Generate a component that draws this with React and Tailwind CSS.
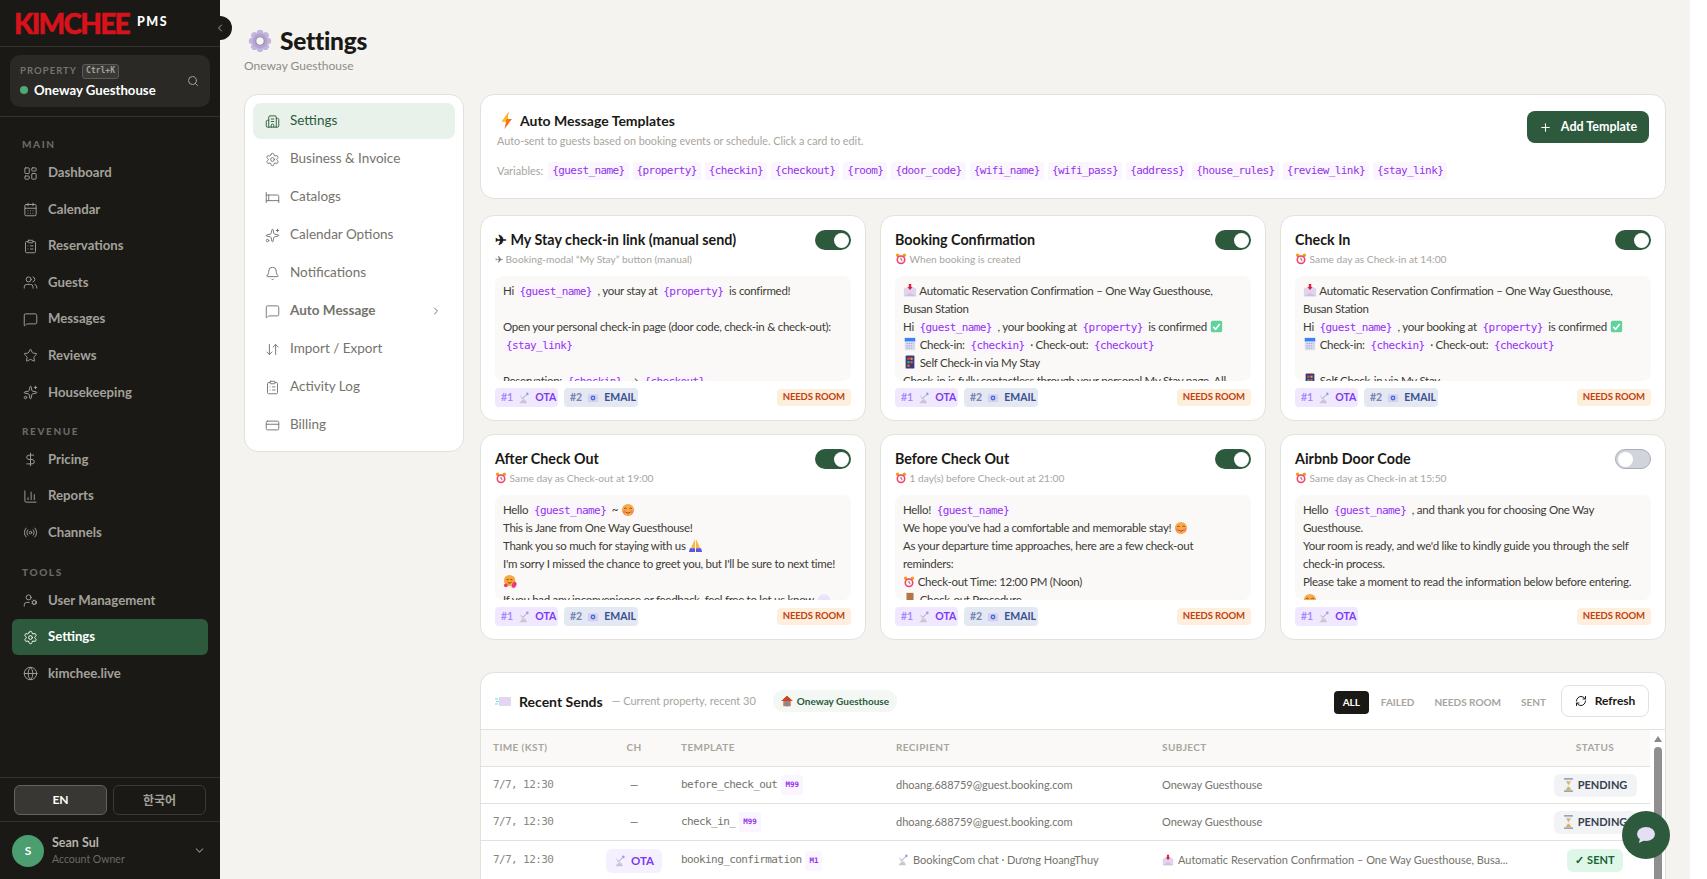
import React from 'react';
import {
  ArrowDownUp, Bed, Bell, Building2, ChartColumn, ChevronDown, ChevronLeft, ChevronRight, ClipboardList,
  CalendarDays, CreditCard, DollarSign, Globe, LayoutDashboard, MessageSquare, Plus, Radio, RefreshCw,
  Search, Settings, Sparkles, Star, UserCog, Users,
} from 'lucide-react';

const MONO = "font-[family-name:'DejaVu_Sans_Mono',monospace]";

// small colour pictograms, the page has these as emoji
const Clock = ({ s = 12 }) => (
  <svg width={s} height={s} viewBox="0 0 16 16" className="inline-block align-[-2px]">
    <circle cx="3.5" cy="3" r="2.2" fill="#f59e0b" /><circle cx="12.5" cy="3" r="2.2" fill="#f59e0b" />
    <circle cx="8" cy="9" r="6" fill="#f43f6e" /><circle cx="8" cy="9" r="4" fill="#fdf2f4" />
    <path d="M8 6.5V9l1.8 1" stroke="#444" strokeWidth="1" fill="none" />
  </svg>
);
const Inbox = ({ s = 14 }) => (
  <svg width={s} height={s} viewBox="0 0 16 16" className="inline-block align-[-2px]">
    <path d="M1 6l3-1h8l3 1v9H1z" fill="#e2d3ee" /><path d="M1 15l7-4 7 4z" fill="#d3bfe2" />
    <path d="M6.6 1h2.8v3.5H11L8 8 5 4.500h1.600z" fill="#e11d48" />
  </svg>
);
const Cal = ({ s = 14 }) => (
  <svg width={s} height={s} viewBox="0 0 16 16" className="inline-block align-[-2px]">
    <rect x="2" y="1" width="12" height="14" rx="1" fill="#dcdcf2" /><rect x="2" y="1" width="12" height="4" fill="#3b82f6" />
    <path d="M4 7.500h8M4 10h8M4 12.500h8" stroke="#a5a5c8" strokeWidth="1.200" strokeDasharray="1.500 1" />
  </svg>
);
const Phone = ({ s = 14 }) => (
  <svg width={s} height={s} viewBox="0 0 16 16" className="inline-block align-[-2px]">
    <rect x="3" y="0.500" width="10" height="15" rx="1" fill="#3b3a78" />
    <rect x="5" y="3" width="2.500" height="2.500" fill="#ef4444" /><rect x="8.500" y="3" width="2.500" height="2.500" fill="#f59e0b" />
    <rect x="5" y="7" width="2.500" height="2.500" fill="#22c55e" /><rect x="8.500" y="7" width="2.500" height="2.500" fill="#ec4899" />
    <rect x="5" y="11" width="2.500" height="2.500" fill="#f97316" />
  </svg>
);
const Check = ({ s = 13 }) => (
  <svg width={s} height={s} viewBox="0 0 16 16" className="inline-block align-[-2px]">
    <rect x="1" y="1" width="14" height="14" rx="2" fill="#5fd39a" /><path d="M4 8.500l3 3 5-6.500" stroke="#fff" strokeWidth="2" fill="none" />
  </svg>
);
const Smile = ({ s = 14 }) => (
  <svg width={s} height={s} viewBox="0 0 16 16" className="inline-block align-[-3px]">
    <circle cx="8" cy="8" r="7" fill="#f7a94b" /><circle cx="4" cy="10" r="1.800" fill="#f47f6a" /><circle cx="12" cy="10" r="1.800" fill="#f47f6a" />
    <path d="M3.500 6.500q1.500-1.500 3 0M9.500 6.500q1.500-1.500 3 0M5.500 10.500q2.500 2.500 5 0" stroke="#7a3b12" strokeWidth="0.900" fill="none" />
  </svg>
);
const Pray = ({ s = 15 }) => (
  <svg width={s} height={s} viewBox="0 0 16 16" className="inline-block align-[-3px]">
    <path d="M7.500 1L3 11h4.500zM8.500 1L13 11H8.500z" fill="#f6b73c" /><path d="M2 11h5.500v4H1zM8.500 11H14l1 4H8.500z" fill="#5b57d9" />
  </svg>
);
const Hearts = ({ s = 15 }) => (
  <svg width={s} height={s} viewBox="0 0 16 16" className="inline-block align-[-3px]">
    <circle cx="7" cy="7" r="6" fill="#f9a63a" /><path d="M10 10l2-2q2 0 2.500 2T12 15l-3-1z" fill="#ec3a78" /><circle cx="3" cy="12" r="2" fill="#ec3a78" />
    <path d="M4 6h2M8 6h2M5 9q2 1.500 4 0" stroke="#7a3b12" strokeWidth="1" fill="none" />
  </svg>
);
const Bubble = ({ s = 14 }) => (
  <svg width={s} height={s} viewBox="0 0 16 16" className="inline-block align-[-3px]">
    <ellipse cx="8" cy="7.500" rx="7" ry="6" fill="#e9e4f7" />
  </svg>
);
const Door = ({ s = 14 }) => (
  <svg width={s} height={s} viewBox="0 0 16 16" className="inline-block align-[-2px]">
    <rect x="4" y="1" width="8" height="14" fill="#b5734a" />
  </svg>
);
const Dish = ({ s = 12 }) => (
  <svg width={s} height={s} viewBox="0 0 16 16" className="inline-block align-[-2px] shrink-0">
    <path d="M2 15h10l-2-4H5z" fill="#c9c5cf" />
    <path d="M3 4q0 7 8 8z" fill="#d3ced9" />
    <path d="M7 8l5-5" stroke="#a29dab" strokeWidth="1.300" />
    <circle cx="12.500" cy="2.500" r="1.700" fill="#86a9e6" />
  </svg>
);
const Mail = ({ s = 12 }) => (
  <svg width={s} height={s} viewBox="0 0 16 16" className="inline-block align-[-2px] shrink-0">
    <rect x="1" y="3" width="14" height="10.500" rx="1" fill="#d9cdf0" /><circle cx="8" cy="8" r="3.200" fill="#3f6fdc" /><circle cx="8" cy="8" r="1.200" fill="#dbe6fb" />
  </svg>
);
const Gear = () => (
  <svg width="24" height="24" viewBox="0 0 26 26">
    <g fill="#c3b5de">
      {[0, 45, 90, 135, 180, 225, 270, 315].map((a) => (
        <circle key={a} cx="13" cy="4.500" r="3.600" transform={`rotate(${a} 13 13)`} />
      ))}
    </g>
    <circle cx="13" cy="13" r="8" fill="#b3a3d4" />
    <circle cx="13" cy="13" r="5" fill="#8d8a94" />
    <circle cx="13" cy="13" r="4" fill="#f6f5f2" />
  </svg>
);
const Bolt = () => (
  <svg width="12" height="17" viewBox="0 0 12 17">
    <path d="M7.500 0L1 9.500h4L3.500 17 11 7H6.500z" fill="#f97316" />
    <path d="M7.500 0L1 9.500h3.500L7 4z" fill="#fbbf24" />
  </svg>
);
const Sending = () => (
  <svg width="16" height="14" viewBox="0 0 16 14">
    <rect x="4" y="3" width="12" height="9" fill="#e2d6f2" />
    <path d="M0 5h3M1 7.500h3M0 10h3" stroke="#5eead4" strokeWidth="1" />
  </svg>
);
const House = () => (
  <svg width="12" height="12" viewBox="0 0 16 16">
    <path d="M8 1L0.500 8H3v7h10V8h2.500z" fill="#d9763f" /><rect x="6" y="9" width="4" height="6" fill="#5b8fd0" />
    <path d="M8 1L0.500 8H15.500z" fill="#c2492f" />
  </svg>
);
const Hourglass = () => (
  <svg width="11" height="14" viewBox="0 0 12 16">
    <path d="M1 1h10M1 15h10" stroke="#94a3b8" strokeWidth="2" />
    <path d="M2.500 2h7q0 4-3 6 3 2 3 6h-7q0-4 3-6-3-2-3-6z" fill="#dbeafe" />
    <path d="M3.500 4h5L6 8zM3 14q1-3 3-4 2 1 3 4z" fill="#f0a93c" />
  </svg>
);

const EMO = {
  clock: Clock, inbox: Inbox, cal: Cal, phone: Phone, check: Check, smile: Smile,
  pray: Pray, hearts: Hearts, bubble: Bubble, door: Door,
};

const Var = ({ children }) => (
  <span className={`${MONO} text-[11px] leading-none tracking-[-0.6px] text-[#9333ea] bg-[#faf5ff] rounded-[3px] px-[2px] mx-[1px]`}>{children}</span>
);

// "{x}" becomes a variable chip, ":x:" a pictogram
const renderLine = (line) =>
  line.split(/(\{\w+\}|:\w+:)/).map((part, i) => {
    if (/^\{\w+\}$/.test(part)) return <Var key={i}>{part}</Var>;
    const m = part.match(/^:(\w+):$/);
    if (m) {
      const E = EMO[m[1]];
      return <E key={i} />;
    }
    return <span key={i}>{part}</span>;
  });

const confirmHead = `:inbox:  Automatic Reservation Confirmation – One Way Guesthouse, Busan Station
Hi {guest_name} , your booking at {property} is confirmed :check:
:cal:  Check-in: {checkin}  · Check-out: {checkout}`;

const TEMPLATES = [
  {
    title: '✈ My Stay check-in link (manual send)',
    sub: <><span className="text-[#77746c]">✈</span> Booking-modal “My Stay” button (manual)</>,
    on: true,
    email: true,
    body: `Hi {guest_name} , your stay at {property} is confirmed!

Open your personal check-in page (door code, check-in & check-out):
{stay_link}

Reservation: {checkin}  → {checkout}`,
  },
  {
    title: 'Booking Confirmation',
    sub: <><Clock /> When booking is created</>,
    on: true,
    email: true,
    body: `${confirmHead}
:phone:  Self Check-in via My Stay
Check-in is fully contactless through your personal My Stay page. All`,
  },
  {
    title: 'Check In',
    sub: <><Clock /> Same day as Check-in at 14:00</>,
    on: true,
    email: true,
    body: `${confirmHead}

:phone:  Self Check-in via My Stay`,
  },
  {
    title: 'After Check Out',
    sub: <><Clock /> Same day as Check-out at 19:00</>,
    on: true,
    email: true,
    body: `Hello {guest_name} ~ :smile:
This is Jane from One Way Guesthouse!
Thank you so much for staying with us  :pray:
I'm sorry I missed the chance to greet you, but I'll be sure to next time!
:hearts:
If you had any inconvenience or feedback, feel free to let us know :bubble:`,
  },
  {
    title: 'Before Check Out',
    sub: <><Clock /> 1 day(s) before Check-out at 21:00</>,
    on: true,
    email: true,
    body: `Hello! {guest_name}
We hope you've had a comfortable and memorable stay! :smile:
As your departure time approaches, here are a few check-out reminders:
:clock:  Check-out Time: 12:00 PM (Noon)
:door:  Check-out Procedure`,
  },
  {
    title: 'Airbnb Door Code',
    sub: <><Clock /> Same day as Check-in at 15:50</>,
    on: false,
    email: false,
    body: `Hello {guest_name} , and thank you for choosing One Way Guesthouse.
Your room is ready, and we'd like to kindly guide you through the self check-in process.
Please take a moment to read the information below before entering.
:smile:`,
  },
];

const VARS = ['guest_name', 'property', 'checkin', 'checkout', 'room', 'door_code', 'wifi_name', 'wifi_pass', 'address', 'house_rules', 'review_link', 'stay_link'];

const NavItem = ({ icon: Icon, label, active }) => (
  <div className={`flex items-center h-9 mx-3 px-[11px] gap-[10px] rounded-md text-[13.200px] font-bold ${active ? 'bg-[#2d5a3d] text-white' : 'text-[#a3a19a]'}`}>
    <Icon size={15} strokeWidth={1.500} className="shrink-0" />
    <span>{label}</span>
  </div>
);

const NavLabel = ({ children, className }) => (
  <div className={`px-[22px] text-[10px] font-black tracking-[0.16em] text-[#6b6a64] ${className}`}>{children}</div>
);

const Sidebar = () => (
  <aside className="w-[220px] shrink-0 h-full bg-[#1a1916] flex flex-col relative">
    <div className="h-[47px] shrink-0 border-b border-[#33322e] flex items-center pl-[14px] gap-[8px]">
      <span className="text-[#d8121a] text-[28px] leading-none font-black tracking-[-1.700px] [-webkit-text-stroke:0.5px_#d8121a] font-[family-name:'Lato',sans-serif]">KIMCHEE</span>
      <span className="text-white text-[12.500px] font-black tracking-[0.12em] -mt-[2px]">PMS</span>
    </div>
    <div className="h-[70px] shrink-0 border-b border-[#33322e] px-[10px] pt-[8px]">
      <div className="h-[52px] rounded-[10px] bg-[#2a2926] flex items-center pl-[10px] pr-[11px]">
        <div className="flex-1">
          <div className="flex items-center gap-[5px] h-[16px]">
            <span className="text-[9.500px] font-bold tracking-[0.11em] text-[#75736c]">PROPERTY</span>
            <span className={`${MONO} text-[8px] font-bold text-[#a3a19a] border border-[#5c5a55] bg-[#3a3936] rounded-[3px] px-[3px] h-[15px] flex items-center`}>Ctrl+K</span>
          </div>
          <div className="flex items-center gap-[6px] mt-[2px]">
            <span className="w-2 h-2 rounded-full bg-[#4fa876]" />
            <span className="text-white text-[13.200px] font-bold leading-[18px]">Oneway Guesthouse</span>
          </div>
        </div>
        <Search size={12} className="text-[#a3a19a]" />
      </div>
    </div>
    <NavLabel className="mt-[21px] mb-[5px] leading-[12px]">MAIN</NavLabel>
    <div className="flex flex-col gap-[0.600px]">
      <NavItem icon={LayoutDashboard} label="Dashboard" />
      <NavItem icon={CalendarDays} label="Calendar" />
      <NavItem icon={ClipboardList} label="Reservations" />
      <NavItem icon={Users} label="Guests" />
      <NavItem icon={MessageSquare} label="Messages" />
      <NavItem icon={Star} label="Reviews" />
      <NavItem icon={Sparkles} label="Housekeeping" />
    </div>
    <NavLabel className="mt-[14px] mb-[5px] leading-[12px]">REVENUE</NavLabel>
    <div className="flex flex-col gap-[0.600px]">
      <NavItem icon={DollarSign} label="Pricing" />
      <NavItem icon={ChartColumn} label="Reports" />
      <NavItem icon={Radio} label="Channels" />
    </div>
    <NavLabel className="mt-[15px] mb-[5px] leading-[12px]">TOOLS</NavLabel>
    <div className="flex flex-col gap-[0.600px]">
      <NavItem icon={UserCog} label="User Management" />
      <NavItem icon={Settings} label="Settings" active />
      <NavItem icon={Globe} label="kimchee.live" />
    </div>
    <div className="mt-auto h-[44px] border-t border-[#33322e] px-[14px] flex items-center gap-[6px]">
      <div className="flex-1 h-[30px] rounded-md bg-[#383733] border border-[#64625d] text-white text-[12px] font-bold flex items-center justify-center">EN</div>
      <div className="flex-1 h-[30px] rounded-md border border-[#3a3935] text-[#a3a19a] text-[12px] font-bold flex items-center justify-center font-[family-name:'Noto_Sans_CJK_KR',sans-serif]">한국어</div>
    </div>
    <div className="h-[58px] border-t border-[#33322e] pl-[12px] pr-[14px] flex items-center gap-[8px]">
      <div className="w-8 h-8 rounded-full bg-[#4a9e6f] text-white text-[12px] font-bold flex items-center justify-center">S</div>
      <div className="flex-1">
        <div className="text-[#b5b3ac] text-[12.500px] font-bold leading-[16px]">Sean Sul</div>
        <div className="text-[#6b6a64] text-[10.500px] leading-[16px]">Account Owner</div>
      </div>
      <ChevronDown size={13} className="text-[#85837c]" />
    </div>
    <div className="absolute left-[208px] top-[16px] w-6 h-6 bg-[#1a1916] rounded-full flex items-center justify-center">
      <ChevronLeft size={12} className="text-[#a3a19a]" />
    </div>
  </aside>
);

const SIDE_MENU = [
  [Building2, 'Settings'], [Settings, 'Business & Invoice'], [Bed, 'Catalogs'], [Sparkles, 'Calendar Options'],
  [Bell, 'Notifications'], [MessageSquare, 'Auto Message'], [ArrowDownUp, 'Import / Export'],
  [ClipboardList, 'Activity Log'], [CreditCard, 'Billing'],
];

const SideMenu = () => (
  <div className="w-[220px] shrink-0 self-start bg-white border border-[#e3e1db] rounded-[14px] p-2 flex flex-col gap-[2px]">
    {SIDE_MENU.map(([Icon, label], i) => (
      <div key={label} className={`h-9 flex items-center gap-[10px] pl-[12px] pr-[13px] rounded-lg text-[13.500px] ${i === 0 ? 'bg-[#e8f2ea] text-[#2d5a3d]' : 'text-[#75736c]'} ${i === 5 ? 'font-bold' : ''}`}>
        <Icon size={15} strokeWidth={1.500} className="shrink-0" />
        <span className="flex-1 pb-[1px]">{label}</span>
        {i === 5 && <ChevronRight size={12} />}
      </div>
    ))}
  </div>
);

const Toggle = ({ on }) => (
  <div className={`w-9 h-5 rounded-full flex items-center px-[2px] shrink-0 ${on ? 'bg-[#2d5a3d] justify-end' : 'bg-[#d1d5db] border border-[#a8adb8]'}`}>
    <span className="w-[15px] h-[15px] rounded-full bg-white" />
  </div>
);

const TemplateCard = ({ t }) => (
  <div className="h-[206px] bg-white border border-[#e3e1db] rounded-[14px] px-[14px] flex flex-col">
    <div className="h-[20px] mt-[14px] flex items-center justify-between">
      <div className="text-[14.300px] font-bold text-[#1a1916] pb-[1px]">{t.title}</div>
      <Toggle on={t.on} />
    </div>
    <div className="text-[10.200px] text-[#a8a59e] mt-[1px] leading-[16px]">{t.sub}</div>
    <div className="mt-[9px] h-[105px] shrink-0 overflow-hidden rounded-lg bg-[#faf9f7] px-[8px] pt-[6px] text-[11.500px] tracking-[-0.280px] leading-[18px] text-[#3d3b36]">
      {t.body.split('\n').map((line, i) => (
        <div key={i} className="min-h-[18px]">{renderLine(line)}</div>
      ))}
    </div>
    <div className="mt-[7px] flex items-center gap-[6px]">
      <div className="h-[19px] w-[63px] pl-[6px] rounded-[4px] bg-[#f0e8fe] flex items-center gap-[5px] text-[10.500px] font-bold">
        <span className="text-[#a78bfa]">#1</span><Dish /><span className="text-[#7c3aed]">OTA</span>
      </div>
      {t.email && (
        <div className="h-[19px] w-[74px] pl-[6px] rounded-[4px] bg-[#e3e8f3] flex items-center gap-[5px] text-[10.500px] font-bold">
          <span className="text-[#7683b0]">#2</span><Mail /><span className="text-[#3b4f91]">EMAIL</span>
        </div>
      )}
      <div className="ml-auto h-[17px] px-[6px] rounded-[4px] bg-[#feeedd] text-[#c2410c] text-[9.500px] tracking-[-0.100px] font-bold flex items-center">NEEDS ROOM</div>
    </div>
  </div>
);

const ROWS = [
  { time: '7/7, 12:30', ch: null, tpl: 'before_check_out', m: 'M99', to: 'dhoang.688759@guest.booking.com', subject: 'Oneway Guesthouse', status: 'pending' },
  { time: '7/7, 12:30', ch: null, tpl: 'check_in_', m: 'M99', to: 'dhoang.688759@guest.booking.com', subject: 'Oneway Guesthouse', status: 'pending' },
  { time: '7/7, 12:30', ch: 'OTA', tpl: 'booking_confirmation', m: 'M1', to: 'BookingCom chat · Dương HoangThuy', subject: 'Automatic Reservation Confirmation – One Way Guesthouse, Busa...', status: 'sent' },
];

const Row = ({ r }) => (
  <div className="flex items-center border-b border-[#e3e1db] h-[37px] shrink-0 last:h-[40px] text-[11px] text-[#75736c]">
    <div className={`${MONO} w-[120px] pl-[12px] text-[11px] tracking-[-0.6px] text-[#8a8780]`}>{r.time}</div>
    <div className="w-[66px] flex justify-center">
      {r.ch ? (
        <span className="h-[24px] px-[8px] rounded-md bg-[#f5f0ff] flex items-center gap-[5px] text-[11.500px] font-bold text-[#7c3aed]"><Dish />{r.ch}</span>
      ) : '—'}
    </div>
    <div className="w-[228px] pl-[14px] flex items-center gap-[4px]">
      <span className={`${MONO} text-[11px] tracking-[-0.6px]`}>{r.tpl}</span>
      <span className={`${MONO} text-[7.500px] font-bold text-[#9333ea] bg-[#faf5ff] rounded-[3px] px-[4px] h-[20px] flex items-center`}>{r.m}</span>
    </div>
    <div className="w-[267px] truncate pl-[1px]">{r.ch && <span className="mr-[4px] ml-[1px]"><Dish /></span>}{r.to}</div>
    <div className="flex-1 truncate">{r.ch && <span className="mr-[4px]"><Inbox s={12} /></span>}{r.subject}</div>
    <div className="w-[110px] flex justify-center">
      {r.status === 'pending' ? (
        <span className="h-[23px] w-[83px] rounded-md bg-[#f1f3f5] flex items-center justify-center gap-[4px] text-[11px] font-bold text-[#374151]"><Hourglass />PENDING</span>
      ) : (
        <span className="h-[23px] px-[8px] rounded-md bg-[#dff7e8] flex items-center gap-[3px] text-[11px] font-bold text-[#166534]">✓ SENT</span>
      )}
    </div>
  </div>
);

const RecentSends = () => (
  <div className="mt-[32px] bg-white border border-[#e3e1db] rounded-t-[14px] border-b-0 h-[300px] flex flex-col">
    <div className="h-[57px] shrink-0 border-b border-[#e3e1db] flex items-center pl-[14px] pr-[16px]">
      <Sending />
      <span className="ml-[8px] text-[14px] font-bold text-[#1a1916]">Recent Sends</span>
      <span className="ml-[9px] text-[11px] text-[#a8a59e]">— Current property, recent 30</span>
      <span className="ml-[17px] h-[22px] px-[8px] rounded-full bg-[#f3f8f4] flex items-center gap-[4px] text-[10px] font-bold text-[#2d5a3d]"><House />Oneway Guesthouse</span>
      <div className="ml-auto mt-[2px] flex items-center text-[10px] font-bold text-[#a8a59e]">
        <span className="h-[23px] w-[35px] rounded bg-[#1a1916] text-white flex items-center justify-center">ALL</span>
        <span className="ml-[12px]">FAILED</span>
        <span className="ml-[20px]">NEEDS ROOM</span>
        <span className="ml-[20px]">SENT</span>
      </div>
      <div className="ml-[15px] w-[88px] h-[32px] rounded-lg border border-[#e3e1db] flex items-center justify-center gap-[8px] text-[12px] font-bold text-[#1a1916]">
        <RefreshCw size={12} />Refresh
      </div>
    </div>
    <div className="flex flex-1 overflow-hidden">
      <div className="flex-1 flex flex-col min-w-0">
        <div className="h-[37px] shrink-0 bg-[#faf9f7] border-b border-[#e3e1db] flex items-center text-[10px] font-bold text-[#a8a59e] tracking-[0.04em] pb-[2px]">
          <div className="w-[120px] pl-[12px]">TIME (KST)</div>
          <div className="w-[66px] text-center">CH</div>
          <div className="w-[228px] pl-[14px]">TEMPLATE</div>
          <div className="w-[267px] pl-[1px]">RECIPIENT</div>
          <div className="flex-1">SUBJECT</div>
          <div className="w-[110px] text-center">STATUS</div>
        </div>
        {ROWS.map((r) => <Row key={r.tpl} r={r} />)}
      </div>
      <div className="w-[15px] shrink-0 flex flex-col items-center pt-[6px]">
        <span className="w-0 h-0 border-x-[4px] border-x-transparent border-b-[6px] border-b-[#8a8a8a]" />
        <span className="w-[8px] mt-[5px] flex-1 rounded-full bg-[#8f8f8f]" />
      </div>
    </div>
  </div>
);

export default function App() {
  return (
    <div className="relative h-screen w-full overflow-hidden flex bg-white text-[#1a1916] font-[family-name:Lato,'Noto_Sans',sans-serif]">
      <Sidebar />
      <main className="flex-1 min-w-0 h-full overflow-hidden bg-[#f4f3ef] pl-6 pr-6 pt-[26px]">
        <div className="flex items-center gap-[8px] pl-[4px] h-[30px]">
          <Gear />
          <h1 className="text-[24.500px] font-black tracking-[-0.010em] text-[#1a1916]">Settings</h1>
        </div>
        <div className="text-[12px] text-[#8f8c85] mt-[2px] leading-[16px]">Oneway Guesthouse</div>
        <div className="flex gap-[16px] mt-[20px]">
          <SideMenu />
          <div className="flex-1 min-w-0">
            <div className="h-[105px] bg-white border border-[#e3e1db] rounded-[14px] pl-[16px] pr-[16px] flex justify-between">
              <div>
                <div className="flex items-center gap-[7px] mt-[16px] pl-[4px] h-[18px]">
                  <Bolt />
                  <span className="text-[14px] font-bold text-[#1a1916]">Auto Message Templates</span>
                </div>
                <div className="text-[10.800px] text-[#a8a59e] mt-[4px] leading-[16px]">Auto-sent to guests based on booking events or schedule. Click a card to edit.</div>
                <div className="flex items-center mt-[13px] gap-[4px] text-[11px] text-[#a8a59e]">
                  <span className="mr-[1px]">Variables:</span>
                  {VARS.map((v) => (
                    <span key={v} className={`${MONO} text-[11px] tracking-[-0.6px] text-[#9333ea] bg-[#faf5ff] rounded-[3px] px-[4px] h-[18px] flex items-center`}>{`{${v}}`}</span>
                  ))}
                </div>
              </div>
              <div className="mt-[16px] h-[32px] w-[122px] rounded-lg bg-[#2d5a3d] text-white text-[12.500px] font-bold flex items-center justify-center gap-[9px]">
                <Plus size={13} />Add Template
              </div>
            </div>
            <div className="grid grid-cols-3 gap-x-[14px] gap-y-[13px] mt-[16px]">
              {TEMPLATES.map((t) => <TemplateCard key={t.title} t={t} />)}
            </div>
            <RecentSends />
          </div>
        </div>
      </main>
      <div className="w-[17px] shrink-0 bg-white" />
      <div className="absolute left-[1622px] top-[811px] w-12 h-12 rounded-full bg-[#2d5a3d] flex items-center justify-center">
        <svg width="20" height="18" viewBox="0 0 20 18">
          <ellipse cx="10" cy="8" rx="9" ry="7" fill="#e6def5" />
          <path d="M4 12l-1 5 6-3z" fill="#e6def5" />
        </svg>
      </div>
    </div>
  );
}
